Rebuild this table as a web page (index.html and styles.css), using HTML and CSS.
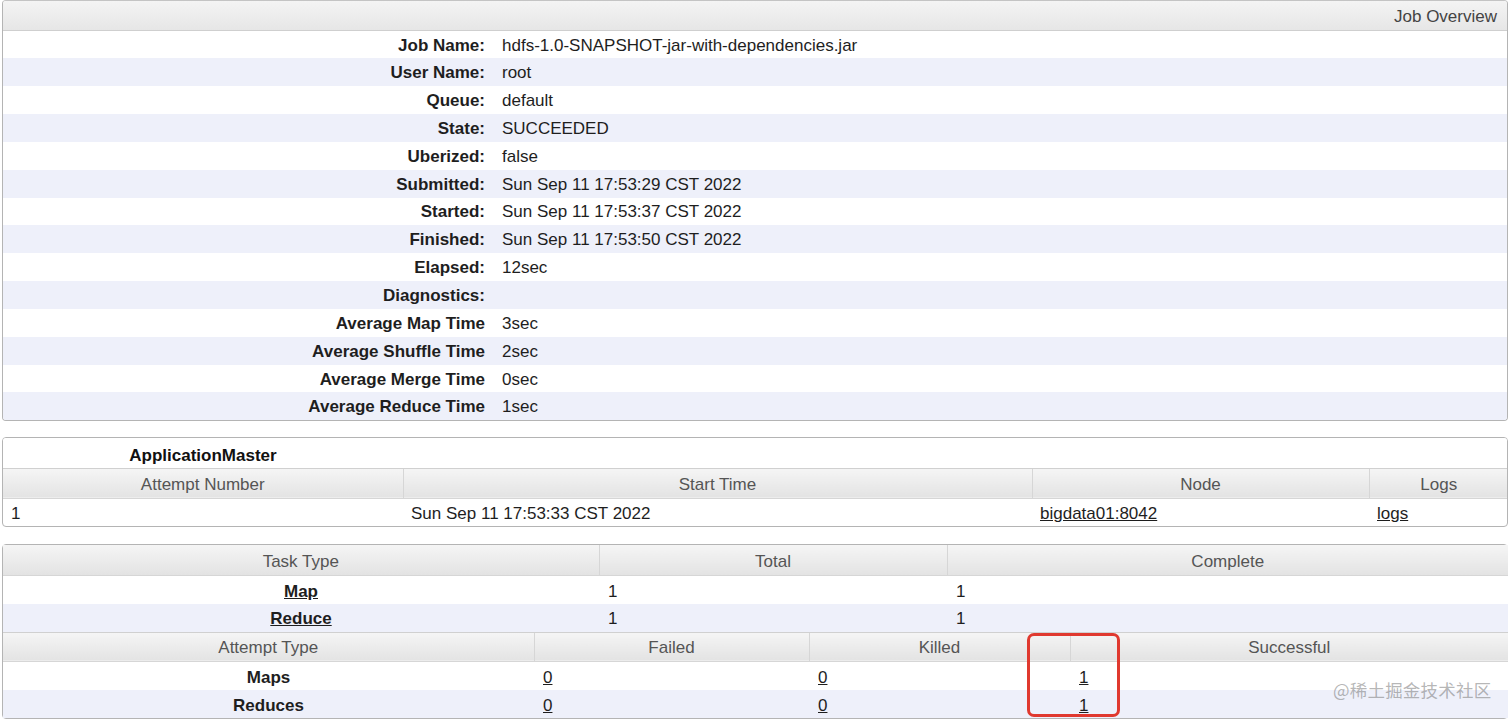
FILE: index.html
```html
<!DOCTYPE html>
<html>
<head>
<meta charset="utf-8">
<link rel="stylesheet" href="styles.css">
</head>
<body>
<div class="page">
  <div class="box box-info">
    <table class="info">
      <colgroup><col class="c-label"><col></colgroup>
      <thead>
        <tr><th colspan="2" class="info-head">Job Overview</th></tr>
      </thead>
      <tbody>
        <tr><th>Job Name:</th><td>hdfs-1.0-SNAPSHOT-jar-with-dependencies.jar</td></tr>
        <tr><th>User Name:</th><td>root</td></tr>
        <tr><th>Queue:</th><td>default</td></tr>
        <tr><th>State:</th><td>SUCCEEDED</td></tr>
        <tr><th>Uberized:</th><td>false</td></tr>
        <tr><th>Submitted:</th><td>Sun Sep 11 17:53:29 CST 2022</td></tr>
        <tr><th>Started:</th><td>Sun Sep 11 17:53:37 CST 2022</td></tr>
        <tr><th>Finished:</th><td>Sun Sep 11 17:53:50 CST 2022</td></tr>
        <tr><th>Elapsed:</th><td>12sec</td></tr>
        <tr><th>Diagnostics:</th><td></td></tr>
        <tr><th>Average Map Time</th><td>3sec</td></tr>
        <tr><th>Average Shuffle Time</th><td>2sec</td></tr>
        <tr><th>Average Merge Time</th><td>0sec</td></tr>
        <tr><th>Average Reduce Time</th><td>1sec</td></tr>
      </tbody>
    </table>
  </div>

  <div class="box box-am">
    <table class="grid">
      <colgroup><col class="am1"><col class="am2"><col class="am3"><col class="am4"></colgroup>
      <tr class="caption-row"><th class="caption">ApplicationMaster</th><th></th><th></th><th></th></tr>
      <tr class="hrow"><th>Attempt Number</th><th>Start Time</th><th>Node</th><th>Logs</th></tr>
      <tr class="drow"><td class="left">1</td><td class="left">Sun Sep 11 17:53:33 CST 2022</td><td class="left"><a href="#">bigdata01:8042</a></td><td class="left"><a href="#">logs</a></td></tr>
    </table>
  </div>

  <div class="box box-tasks">
    <table class="grid">
      <colgroup><col class="t1"><col class="t2"><col class="t3"></colgroup>
      <tr class="hrow hfirst"><th>Task Type</th><th>Total</th><th>Complete</th></tr>
      <tr class="drow odd"><td class="center"><a href="#" class="bold">Map</a></td><td class="left">1</td><td class="left">1</td></tr>
      <tr class="drow even"><td class="center"><a href="#" class="bold">Reduce</a></td><td class="left">1</td><td class="left">1</td></tr>
    </table>
    <table class="grid">
      <colgroup><col class="a1"><col class="a2"><col class="a3"><col class="a4"></colgroup>
      <tr class="hrow hsecond"><th>Attempt Type</th><th>Failed</th><th>Killed</th><th>Successful</th></tr>
      <tr class="drow odd tall"><td class="center bold">Maps</td><td class="left"><a href="#">0</a></td><td class="left"><a href="#">0</a></td><td class="left"><a href="#">1</a></td></tr>
      <tr class="drow even"><td class="center bold">Reduces</td><td class="left"><a href="#">0</a></td><td class="left"><a href="#">0</a></td><td class="left"><a href="#">1</a></td></tr>
    </table>
    <div class="mark"></div>
    <div class="watermark">@稀土掘金技术社区</div>
  </div>
</div>
</body>
</html>
```

FILE: styles.css
```css
html, body {
  margin: 0;
  padding: 0;
  background: #ffffff;
}
body {
  font-family: "Liberation Sans", Arial, "Noto Sans CJK SC", sans-serif;
  font-size: 17px;
  color: #1e1e1e;
}
.page {
  padding: 0 4px 0 2px;
}
.box {
  border: 1px solid #b4b4b4;
  border-radius: 4px;
  overflow: hidden;
  background: #fff;
}
.box-info {
  border-top-color: #c4c4c4;
}
.box-am {
  margin-top: 16px;
}
.box-tasks {
  margin-top: 17px;
  position: relative;
  overflow: visible;
}
table {
  width: 100%;
  border-collapse: collapse;
  table-layout: fixed;
}
th, td {
  padding: 2px 0 0 0;
  white-space: nowrap;
  overflow: hidden;
}

/* Job overview */
.c-label { width: 494px; }
.info-head {
  height: 27px;
  text-align: right;
  padding-right: 10px;
  font-weight: normal;
  color: #444;
  background: linear-gradient(#f4f4f4, #e6e6e6);
  border-bottom: 1px solid #cfcfcf;
}
.info tbody tr { height: 27.85px; }
.info tbody tr:nth-child(even) { background: #eef0fa; }
.info tbody th {
  text-align: right;
  padding-right: 12px;
  font-weight: bold;
}
.info tbody td {
  text-align: left;
  padding-left: 5px;
}

/* grids */
.am1 { width: 400px; }
.am2 { width: 629px; }
.am3 { width: 337px; }
.am4 { width: 139px; }
.t1 { width: 596px; }
.t2 { width: 348px; }
.t3 { width: 561px; }
.a1 { width: 531px; }
.a2 { width: 275px; }
.a3 { width: 261px; }
.a4 { width: 438px; }

.caption-row { height: 30px; }
.caption-row th {
  padding-top: 6px;
  font-weight: bold;
  text-align: center;
  color: #111;
  background: #fff;
}
.hrow { height: 30px; }
.hrow th {
  font-weight: normal;
  color: #555;
  text-align: center;
  background: linear-gradient(#f5f5f5, #e3e3e3);
  border-left: 1px solid #d6d6d6;
  border-top: 1px solid #d0d0d0;
  border-bottom: 1px solid #d6d6d6;
}
.box-am .hrow th { padding-top: 4px; }
.hrow th:first-child { border-left: none; }
.hfirst { height: 31px; }
.hfirst th { border-top: none; padding-top: 4px; }
.hsecond { height: 29px; }
.drow { height: 27.5px; }
.box-am .drow td { padding-top: 4px; }
.box-tasks .drow { height: 28px; }
.box-tasks .drow td { padding-top: 3px; }
.box-tasks .drow.tall { height: 29px; }
.drow.even { background: #eef0fa; }
.drow.odd { background: #fff; }
.left { text-align: left; padding-left: 9px; }
.box-am .left { padding-left: 8px; }
.center { text-align: center; }
.bold { font-weight: bold; }
a {
  color: #1e1e1e;
  text-decoration: underline;
}

/* annotation overlay */
.mark {
  position: absolute;
  left: 1024px;
  top: 88px;
  width: 87px;
  height: 78px;
  border: 3px solid #e0392f;
  border-radius: 7px;
}
.watermark {
  position: absolute;
  left: 1330px;
  top: 132px;
  white-space: nowrap;
  font-family: "Noto Sans CJK SC", sans-serif;
  font-size: 17.5px;
  letter-spacing: 0.2px;
  color: rgba(120, 120, 120, 0.55);
}
```
